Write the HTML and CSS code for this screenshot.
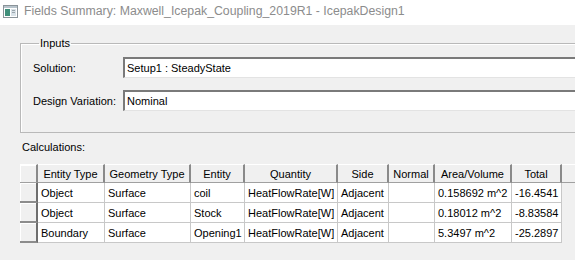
FILE: index.html
```html
<!DOCTYPE html>
<html lang="en">
<head>
<meta charset="UTF-8">
<title>Fields Summary</title>
<link rel="stylesheet" href="styles.css">
</head>
<body>

<div class="titlebar">
    <svg class="app-icon" width="15" height="13" viewBox="0 0 15 13">
        <rect x="0.5" y="0.5" width="14" height="12" fill="#ffffff" stroke="#8a9399"/>
        <rect x="1" y="1" width="13" height="2" fill="#b8c4cc"/>
        <rect x="2" y="4" width="5" height="7" fill="#3f8f7a"/>
        <rect x="8" y="4" width="5" height="7" fill="#d9e2e8"/>
        <rect x="9" y="5" width="3" height="1" fill="#9aa6ad"/>
        <rect x="9" y="7" width="3" height="1" fill="#9aa6ad"/>
    </svg>
    <span class="title">Fields Summary: Maxwell_Icepak_Coupling_2019R1 - IcepakDesign1</span>
</div>

<div class="content">
    <fieldset class="group">
        <legend>Inputs</legend>
        <div class="field">
            <label>Solution:</label>
            <div class="textbox">Setup1 : SteadyState</div>
        </div>
        <div class="field">
            <label>Design Variation:</label>
            <div class="textbox">Nominal</div>
        </div>
    </fieldset>

    <div class="calc-label">Calculations:</div>

    <table class="grid">
        <colgroup>
            <col class="c-row">
            <col class="c-type">
            <col class="c-geom">
            <col class="c-ent">
            <col class="c-qty">
            <col class="c-side">
            <col class="c-norm">
            <col class="c-area">
            <col class="c-total">
            <col class="c-fill">
        </colgroup>
        <tr class="head">
            <th class="rowhead"></th>
            <th>Entity Type</th>
            <th>Geometry Type</th>
            <th>Entity</th>
            <th>Quantity</th>
            <th>Side</th>
            <th>Normal</th>
            <th>Area/Volume</th>
            <th>Total</th>
            <th class="filler"></th>
        </tr>
        <tr>
            <td class="rowhead"></td>
            <td>Object</td>
            <td>Surface</td>
            <td>coil</td>
            <td>HeatFlowRate[W]</td>
            <td>Adjacent</td>
            <td></td>
            <td>0.158692 m^2</td>
            <td>-16.4541</td>
            <td class="empty"></td>
        </tr>
        <tr>
            <td class="rowhead"></td>
            <td>Object</td>
            <td>Surface</td>
            <td>Stock</td>
            <td>HeatFlowRate[W]</td>
            <td>Adjacent</td>
            <td></td>
            <td>0.18012 m^2</td>
            <td>-8.83584</td>
            <td class="empty"></td>
        </tr>
        <tr>
            <td class="rowhead"></td>
            <td>Boundary</td>
            <td>Surface</td>
            <td>Opening1</td>
            <td>HeatFlowRate[W]</td>
            <td>Adjacent</td>
            <td></td>
            <td>5.3497 m^2</td>
            <td>-25.2897</td>
            <td class="empty"></td>
        </tr>
    </table>
</div>

</body>
</html>
```

FILE: styles.css
```css
body {
    margin: 0;
    width: 575px;
    height: 260px;
    overflow: hidden;
    background: #f0f0f0;
    font-family: "Liberation Sans", Arial, sans-serif;
    font-size: 11px;
    color: #000;
}

.titlebar {
    height: 25px;
    background: #fff;
    display: flex;
    align-items: center;
    padding-left: 3px;
}
.app-icon {
    margin-right: 6px;
    margin-top: -3px;
}
.title {
    font-size: 12.3px;
    color: #8c8c8c;
    margin-top: -3px;
}

.content {
    padding-top: 12px;
}

.group {
    margin: 0 0 0 20px;
    padding: 7px 0 21px 12px;
    border: 1px solid #b9b9b9;
    border-right: none;
    box-shadow: inset 1px 1px 0 #fff;
    display: flex;
    flex-direction: column;
    gap: 12px;
}
.group legend {
    padding: 0 1px;
    margin-left: 6px;
    line-height: 13px;
}
.field {
    display: flex;
    align-items: center;
}
.field label {
    width: 90px;
}
.textbox {
    flex: 1;
    height: 21px;
    box-sizing: border-box;
    background: #fff;
    border-top: 2px solid #7a7a7a;
    border-left: 2px solid #7a7a7a;
    border-bottom: 1px solid #e3e3e3;
    padding-left: 2px;
    line-height: 18px;
}

.calc-label {
    margin: 8px 0 0 22px;
    line-height: 13px;
}

.grid {
    margin: 10px 0 0 20px;
    width: 555px;
    border-collapse: separate;
    border-spacing: 0;
    table-layout: fixed;
}
.c-row { width: 18px; }
.c-type { width: 67px; }
.c-geom { width: 86px; }
.c-ent { width: 54px; }
.c-qty { width: 93px; }
.c-side { width: 51px; }
.c-norm { width: 46px; }
.c-area { width: 77px; }
.c-total { width: 50px; }
.c-fill { width: 13px; }

.grid th, .grid td {
    box-sizing: border-box;
    padding: 0 0 0 3px;
    height: 20px;
    white-space: nowrap;
    overflow: hidden;
    text-align: left;
    font-weight: normal;
    background: #fff;
    border-right: 1px solid #c8c8c8;
    border-bottom: 1px solid #c8c8c8;
}
.grid .head th {
    height: 19px;
    padding: 0;
    text-align: center;
    background: #f0f0f0;
    border-top: 1px solid #fff;
    border-right: 2px solid #8a8a8a;
    border-bottom: 1px solid #a0a0a0;
}
.grid .rowhead {
    padding: 0;
    background: #f0f0f0;
    border-right: 2px solid #6e6e6e;
    border-bottom: 2px solid #8c8c8c;
    box-shadow: inset 1px 1px 0 #fff;
}
.grid .head .filler {
    border-right: none;
}
.grid td.empty {
    background: #f0f0f0;
    border: none;
}
```
